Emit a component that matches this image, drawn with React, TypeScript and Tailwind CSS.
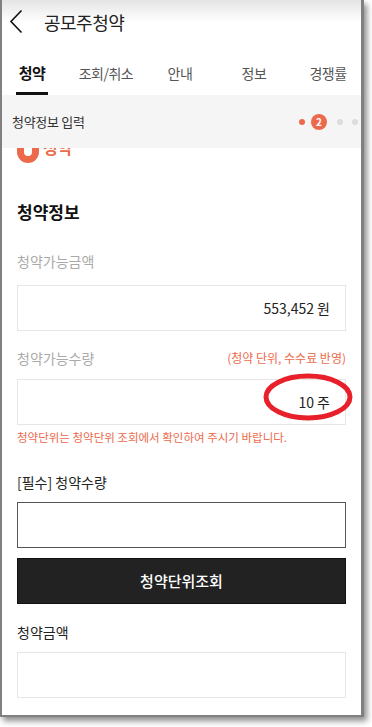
const tabs = ['청약', '조회/취소', '안내', '정보', '경쟁률'];

const Field = ({ value, dark }: { value?: string; dark?: boolean }) => (
  <div className={`h-[46px] flex items-center justify-end pr-[15px] text-[14px] text-[#222] border ${dark ? 'border-[#555]' : 'border-[#e6e6e6]'}`}>
    {value}
  </div>
);

export default function App() {
  return (
    <div className="w-[372px] h-[727px] bg-white overflow-hidden" style={{ fontFamily: '"Noto Sans CJK KR", "Noto Sans", sans-serif' }}>
      <div className="w-[364px] h-[717px] bg-white border-l-2 border-r-[3px] border-b-2 border-[#808080] shadow-[3px_4px_6px_rgba(0,0,0,0.45)] overflow-hidden flex flex-col">
        {/* header */}
        <div className="h-[44px] flex items-center bg-gradient-to-b from-[#e4e4e4] via-white to-white">
          <svg className="ml-[7px]" width="14" height="26" viewBox="0 0 14 26">
            <polyline points="12.5,1.5 2,12.5 12.5,23.5" fill="none" stroke="#111" strokeWidth="1.6" />
          </svg>
          <span className="ml-[21px] text-[18px] text-[#222] tracking-[-0.5px]">공모주청약</span>
        </div>

        {/* tabs */}
        <div className="flex ml-[-7px]">
          {tabs.map((t, i) => (
            <div key={t} className="w-[74px] shrink-0 flex flex-col items-center pt-[19px]">
              <span className={`leading-[20px] tracking-[-0.5px] ${i === 0 ? 'text-[15px] font-bold text-[#111]' : 'text-[14px] text-[#555]'}`}>{t}</span>
              <div className={`mt-[9px] h-[3px] w-[32px] ${i === 0 ? 'bg-[#111]' : 'bg-transparent'}`} />
            </div>
          ))}
        </div>

        {/* step bar */}
        <div className="h-[53px] bg-[#f5f5f5] flex items-center justify-between pl-[10px] pr-[3px]">
          <span className="text-[13px] text-[#333] tracking-[-0.3px]">청약정보 입력</span>
          <div className="flex items-center">
            <span className="w-[6px] h-[6px] rounded-full bg-[#ec6a4c]" />
            <span className="ml-[6px] w-[16px] h-[16px] rounded-full bg-[#ec6a4c] text-white text-[10px] font-bold flex items-center justify-center leading-none">2</span>
            <span className="ml-[10px] w-[6px] h-[6px] rounded-full bg-[#dcdcdc]" />
            <span className="ml-[9px] w-[6px] h-[6px] rounded-full bg-[#dcdcdc]" />
          </div>
        </div>

        {/* content scrolled under the sticky bar */}
        <div className="h-[16px] overflow-hidden">
          <div className="flex items-end ml-[15px] mt-[-16px]">
            <div className="w-[22px] h-[31px] rounded-full border-[7px] border-[#ec6a4c]" />
            <span className="ml-[4px] mb-[6px] text-[16px] font-bold leading-[20px] text-[#ec6a4c]">청약</span>
          </div>
        </div>

        <div className="px-[15px]">
          <h2 className="mt-[36px] text-[17px] font-bold leading-[24px] text-[#111]">청약정보</h2>

          <div className="mt-[27px] text-[14px] leading-[20px] text-[#aaa]">청약가능금액</div>
          <div className="mt-[14px]">
            <Field value="553,452 원" />
          </div>

          <div className="mt-[17px] flex justify-between items-center leading-[20px]">
            <span className="text-[14px] text-[#aaa]">청약가능수량</span>
            <span className="text-[12px] text-[#ec6a4c]">(청약 단위, 수수료 반영)</span>
          </div>
          <div className="mt-[11px] relative">
            <Field value="10 주" />
            <svg className="absolute right-[-8px] top-[-6px]" width="92" height="50" viewBox="0 0 92 50">
              <ellipse cx="46" cy="24" rx="42" ry="21" fill="none" stroke="#e8202a" strokeWidth="5" />
            </svg>
          </div>
          <p className="mt-[4px] text-[11.5px] leading-[16px] text-[#ec6a4c]">청약단위는 청약단위 조회에서 확인하여 주시기 바랍니다.</p>

          <div className="mt-[27px] text-[14px] leading-[20px] text-[#222]">[필수] 청약수량</div>
          <div className="mt-[10px]">
            <Field dark />
          </div>
          <button className="mt-[10px] w-full h-[46px] bg-[#222] border border-[#111] text-white text-[15px] font-medium">청약단위조회</button>

          <div className="mt-[18px] text-[14px] leading-[20px] text-[#222]">청약금액</div>
          <div className="mt-[10px]">
            <Field />
          </div>
        </div>
      </div>
    </div>
  );
}
